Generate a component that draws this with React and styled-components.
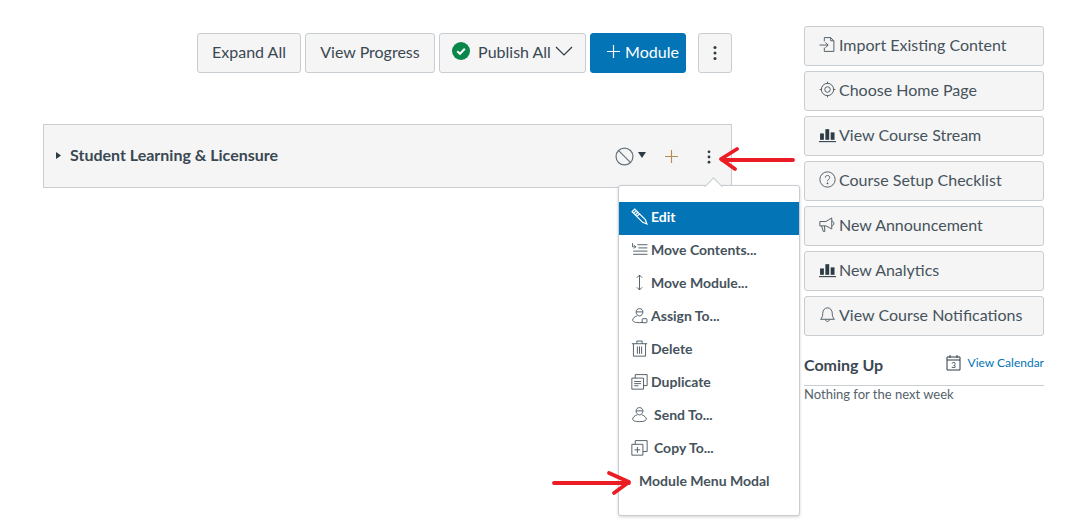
import React from 'react';
import styled, { createGlobalStyle } from 'styled-components';

const GlobalStyle = createGlobalStyle`
  html, body {
    margin: 0;
    padding: 0;
    background: #fff;
    font-family: Lato, "Open Sans", sans-serif;
    color: #2d3b45;
  }
`;

const Page = styled.div`
  display: flex;
  align-items: flex-start;
  gap: 72px;
  width: 1068px;
  height: 530px;
  padding: 26px 0 0 43px;
  box-sizing: border-box;
  overflow: hidden;
`;

const Main = styled.div`
  position: relative;
  width: 689px;
  padding-top: 7px;
`;

const Toolbar = styled.div`
  display: flex;
  justify-content: flex-end;
  gap: 4px;
  height: 40px;
  margin-bottom: 51px;
`;

const Button = styled.button`
  display: flex;
  align-items: center;
  justify-content: center;
  gap: ${(p) => p.$gap || 0}px;
  box-sizing: border-box;
  width: ${(p) => p.$w}px;
  height: 40px;
  margin-left: ${(p) => p.$ml || 0}px;
  padding: 0 0 ${(p) => (p.$icon ? 0 : 4)}px ${(p) => (p.$primary ? 10 : 0)}px;
  border: 1px solid ${(p) => (p.$primary ? '#0374b5' : '#c7cdd1')};
  border-radius: 3px;
  background: ${(p) => (p.$primary ? '#0374b5' : '#f5f5f5')};
  color: ${(p) => (p.$primary ? '#fff' : '#3a4852')};
  font-family: inherit;
  font-size: 16px;
`;

const ModuleRow = styled.div`
  position: relative;
  display: flex;
  align-items: center;
  box-sizing: border-box;
  height: 64px;
  padding-left: 12px;
  border: 1px solid #c7cdd1;
  background: #f5f5f5;
`;

const ModuleCaret = styled.svg`
  margin-bottom: 2px;
`;

const ModuleTitle = styled.span`
  margin: 0 0 4px 9px;
  font-size: 16px;
  font-weight: 700;
  color: #3a4852;
`;

const RowActions = styled.div`
  display: flex;
  align-items: center;
  margin: 1px 0 0 auto;
  padding-right: 19px;
`;

const StatusCaret = styled.svg`
  margin-left: 4px;
  margin-bottom: 3px;
`;

const PlusAction = styled.span`
  display: flex;
  margin: 0 28px 0 19px;
`;

const ChevronDown = styled.svg`
  margin-left: -4px;
`;

const Menu = styled.div`
  position: absolute;
  top: 159px;
  left: 575px;
  box-sizing: border-box;
  width: 182px;
  height: 331px;
  padding-top: 16px;
  border: 1px solid #c7cdd1;
  border-radius: 3px;
  background: #fff;
  box-shadow: 0 1px 3px rgba(0, 0, 0, 0.18);

  &::before {
    content: '';
    position: absolute;
    top: -6px;
    left: 88px;
    width: 12px;
    height: 12px;
    border-top: 1px solid #c7cdd1;
    border-left: 1px solid #c7cdd1;
    background: #fff;
    transform: rotate(45deg);
  }
`;

const MenuItem = styled.div`
  position: relative;
  display: flex;
  align-items: center;
  gap: ${(p) => p.$gap ?? 3}px;
  box-sizing: border-box;
  height: 33px;
  padding: 0 0 4px ${(p) => p.$pl ?? 12}px;
  background: ${(p) => (p.$active ? '#0374b5' : 'transparent')};
  color: ${(p) => (p.$active ? '#fff' : '#46535c')};
  font-size: 14px;
  font-weight: 700;
`;

const ArrowMark = styled.svg`
  position: absolute;
  top: ${(p) => p.$top}px;
  left: ${(p) => p.$left}px;
`;

const Sidebar = styled.aside`
  display: flex;
  flex-direction: column;
  gap: 5px;
  width: 240px;
`;

const SideButton = styled.button`
  display: flex;
  align-items: center;
  gap: 3px;
  box-sizing: border-box;
  width: 240px;
  height: 40px;
  padding: 0 0 4px 14px;
  border: 1px solid #c7cdd1;
  border-radius: 3px;
  background: #f5f5f5;
  color: #46535c;
  font-family: inherit;
  font-size: 16px;
`;

const ComingHeader = styled.div`
  display: flex;
  justify-content: space-between;
  align-items: center;
  height: 26px;
  margin-top: 10px;
  padding-bottom: 8px;
  border-bottom: 1px solid #c7cdd1;
`;

const ComingTitle = styled.h2`
  margin: 0;
  font-size: 16px;
  font-weight: 700;
  color: #3a4852;
`;

const CalendarLink = styled.a`
  display: flex;
  align-items: center;
  gap: 7px;
  margin-top: -4px;
  color: #0374b5;
  font-size: 12px;
`;

const EmptyNote = styled.p`
  margin: -5px 0 0;
  font-size: 13px;
  line-height: 16px;
  color: #55626b;
`;

const Icon = ({ size = 17, children, color = 'currentColor', sw = 0.85 }) => (
  <svg width={size} height={size} viewBox="0 0 16 16" fill="none" stroke={color} strokeWidth={sw} style={{ flexShrink: 0 }}>
    {children}
  </svg>
);

const Kebab = () => (
  <svg width="16" height="16" viewBox="0 0 16 16" fill="#2d3b45">
    <circle cx="8" cy="2.6" r="1.5" />
    <circle cx="8" cy="8" r="1.5" />
    <circle cx="8" cy="13.4" r="1.5" />
  </svg>
);

const Bars = () => (
  <Icon>
    <g fill="#2d3b45" stroke="none">
      <rect x="1" y="7" width="3.6" height="6" />
      <rect x="6" y="3" width="3.6" height="10" />
      <rect x="11" y="6" width="3.6" height="7" />
      <rect x="0" y="14.2" width="16" height="1" />
    </g>
  </Icon>
);

const Person = ({ lock }) => (
  <Icon>
    <path d="M8 1.500c-2 0-3.200 1.400-3.200 3.200S6 8.400 8 8.400s3.200-1.900 3.200-3.700S10 1.500 8 1.500zM5 4.600h6" />
    <path d="M5.600 8.400C3.400 9.200 1.600 10.600 1.600 12.400c0 1.500 2.200 2.300 6.400 2.300 1 0 2-.1 3-.2" />
    {lock ? <rect x="10.500" y="11" width="4.500" height="3.800" rx=".6" /> : <path d="M10.400 8.400c2.200.8 4 2.200 4 4 0 1-1 1.700-3.400 2.100" />}
  </Icon>
);

const sideItems = [
  ['Import Existing Content', <Icon key="i"><path d="M5 5V1.500h6l3 3v10H5V11" /><path d="M11 1.500v3h3M0.500 8.500h8M6 6l2.600 2.500L6 11" /></Icon>],
  ['Choose Home Page', <Icon key="h"><circle cx="8" cy="8" r="5.800" /><circle cx="8" cy="8" r="2.600" /><path d="M8 .6v2M8 13.400v2M.6 8h2M13.400 8h2" /></Icon>],
  ['View Course Stream', <Bars key="s" />],
  ['Course Setup Checklist', <Icon key="c"><circle cx="8" cy="8" r="7.200" /><path d="M5.900 6.200C6 4.900 6.900 4.200 8 4.200c1.200 0 2.100.8 2.100 1.900 0 1.700-2.100 1.700-2.100 3.500" /><circle cx="8" cy="11.600" r=".5" fill="currentColor" /></Icon>],
  ['New Announcement', <Icon key="a"><path d="M.8 5.200h5.700L12 1.800v10.400L6.500 9.300H.8zM2.500 9.300l1.500 5.200h1.500L5.200 9.300M12 4.800c2.600 0 2.600 4.400 0 4.400" /></Icon>],
  ['New Analytics', <Bars key="n" />],
  ['View Course Notifications', <Icon key="b"><path d="M1.500 12.500c1.500-1.500 2-3 2-5.500 0-2.900 1.900-5.300 4.500-5.300s4.500 2.400 4.500 5.300c0 2.500.5 4 2 5.500zM6.300 12.800c0 2.400 3.400 2.400 3.400 0" /></Icon>],
];

const menuItems = [
  ['Move Contents...', <Icon key="m"><path d="M1.500 2v3.500h3M3 4l1.500 1.500L3 7M6 3.500h9.500M7 6.500h8.500M2 9.500h13.500M2 12.500h13.500" /></Icon>],
  ['Move Module...', <Icon key="o"><path d="M8 1v14M5.500 3.500 8 1l2.500 2.500M5.500 12.500 8 15l2.500-2.500" /></Icon>],
  ['Assign To...', <Person key="p" lock />],
  ['Delete', <Icon key="d"><path d="M.8 3.500h14.400M5.500 3.500V1h5v2.500M2.300 3.500v11.700h11.400V3.500M6 6v7M8 6v7M10 6v7" /></Icon>],
  ['Duplicate', <Icon key="u"><path d="M.8 4.800h11v10.400H.8zM3 8h6.500M3 10h6.500M3 12h4M4 4.800V1.500h11.200v10.300h-3.400" /></Icon>],
];

const CheckBadge = () => (
  <svg width="18" height="18" viewBox="0 0 18 18">
    <circle cx="9" cy="9" r="9" fill="#0b874b" />
    <path d="M5.200 9.300 8 11.800l4.800-5" fill="none" stroke="#fff" strokeWidth="2" />
  </svg>
);

const App = () => (
  <Page>
    <GlobalStyle />
    <Main>
      <Toolbar>
        <Button $w={104}>Expand All</Button>
        <Button $w={130}>View Progress</Button>
        <Button $w={147} $gap={8}>
          <CheckBadge />
          Publish All
          <ChevronDown width="18" height="10" viewBox="0 0 18 10" fill="none" stroke="#2d3b45" strokeWidth="1.200">
            <path d="M1 1l8 8 8-8" />
          </ChevronDown>
        </Button>
        <Button $w={96} $primary $gap={5}>
          <svg width="13" height="13" viewBox="0 0 14 14" stroke="#fff" strokeWidth="1.300"><path d="M7 0v14M0 7h14" /></svg>
          Module
        </Button>
        <Button $w={34} $ml={8} $icon><Kebab /></Button>
      </Toolbar>

      <ModuleRow>
        <ModuleCaret width="5" height="7" viewBox="0 0 5 7" fill="#2d3b45"><path d="M0 0l5 3.500L0 7z" /></ModuleCaret>
        <ModuleTitle>Student Learning &amp; Licensure</ModuleTitle>
        <RowActions>
          <svg width="19" height="19" viewBox="0 0 20 20" fill="none" stroke="#66737c" strokeWidth="1.300">
            <circle cx="10" cy="10" r="8.900" />
            <path d="M3.800 3.800l12.400 12.400" />
          </svg>
          <StatusCaret width="8" height="6" viewBox="0 0 8 6" fill="#2d3b45"><path d="M0 0h8L4 6z" /></StatusCaret>
          <PlusAction>
            <svg width="13" height="13" viewBox="0 0 14 14" stroke="#b98a50" strokeWidth="1.200"><path d="M7 0v14M0 7h14" /></svg>
          </PlusAction>
          <svg width="6" height="14" viewBox="0 0 6 14" fill="#2d3b45">
            <circle cx="3" cy="1.800" r="1.400" />
            <circle cx="3" cy="7" r="1.400" />
            <circle cx="3" cy="12.200" r="1.400" />
          </svg>
        </RowActions>
      </ModuleRow>

      <Menu>
        <MenuItem $active>
          <Icon sw={1.1}>
            <path d="M1 3.500 3.500 1l10 10 1.500 4-4-1.500zM2.500 5l2.500-2.500M4 6.500 6.500 4M5.500 8 8 5.500" />
          </Icon>
          Edit
        </MenuItem>
        {menuItems.map(([label, icon]) => (
          <MenuItem key={label}>
            {icon}
            {label}
          </MenuItem>
        ))}
        <MenuItem $gap={6}>
          <Person />
          Send To...
        </MenuItem>
        <MenuItem $gap={6}>
          <Icon>
            <path d="M.8 5h10.400v10.200H.8zM6 7.500v5.500M3.300 10.200h5.400M4 5V1.500h11.200v10.300h-4" />
          </Icon>
          Copy To...
        </MenuItem>
        <MenuItem $pl={20}>Module Menu Modal</MenuItem>
      </Menu>

      <ArrowMark $top={120} $left={676} width="78" height="26" viewBox="0 0 78 26" fill="none" stroke="#ec1c24" strokeWidth="3.800" strokeLinecap="round" strokeLinejoin="round">
        <path d="M74 14H3M18 3 2 13l14 10" />
      </ArrowMark>
      <ArrowMark $top={444} $left={508} width="82" height="26" viewBox="0 0 82 26" fill="none" stroke="#ec1c24" strokeWidth="3.800" strokeLinecap="round" strokeLinejoin="round">
        <path d="M3 13h75M58 3l20 9-15 11" />
      </ArrowMark>
    </Main>

    <Sidebar>
      {sideItems.map(([label, icon]) => (
        <SideButton key={label}>
          {icon}
          {label}
        </SideButton>
      ))}
      <ComingHeader>
        <ComingTitle>Coming Up</ComingTitle>
        <CalendarLink>
          <svg width="15" height="17" viewBox="0 0 15 17" fill="none" stroke="#2d3b45" strokeWidth="1">
            <path d="M1 3h13v13H1zM1 6h13M4 1v3M11 1v3" />
            <text x="7.500" y="14" textAnchor="middle" fontSize="8" fill="#2d3b45" stroke="none" fontFamily="Lato">3</text>
          </svg>
          View Calendar
        </CalendarLink>
      </ComingHeader>
      <EmptyNote>Nothing for the next week</EmptyNote>
    </Sidebar>
  </Page>
);

export default App;
